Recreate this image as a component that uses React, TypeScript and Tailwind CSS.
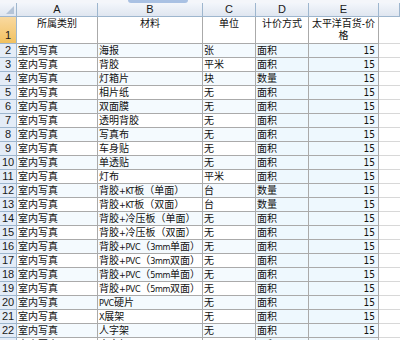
import React from "react";

const rows: [string, string, string][] = [
  ["海报", "张", "面积"],
  ["背胶", "平米", "面积"],
  ["灯箱片", "块", "数量"],
  ["相片纸", "无", "面积"],
  ["双面膜", "无", "面积"],
  ["透明背胶", "无", "面积"],
  ["写真布", "无", "面积"],
  ["车身贴", "无", "面积"],
  ["单透贴", "无", "面积"],
  ["灯布", "平米", "面积"],
  ["背胶+KT板（单面）", "台", "数量"],
  ["背胶+KT板（双面）", "台", "数量"],
  ["背胶+冷压板（单面）", "无", "面积"],
  ["背胶+冷压板（双面）", "无", "面积"],
  ["背胶+PVC（3mm单面）", "无", "面积"],
  ["背胶+PVC（3mm双面）", "无", "面积"],
  ["背胶+PVC（5mm单面）", "无", "面积"],
  ["背胶+PVC（5mm双面）", "无", "面积"],
  ["PVC硬片", "无", "面积"],
  ["X展架", "无", "面积"],
  ["人字架", "无", "面积"],
  ["人字架", "无", "面积"],
];

function Mixed({ text }: { text: string }) {
  const parts = text.split(/([\x20-\x7e]+)/).filter((p) => p.length > 0);
  return (
    <>
      {parts.map((p, i) =>
        /^[\x20-\x7e]+$/.test(p) ? (
          <span key={i} className="text-[9px] tracking-[-0.4px]">
            {p}
          </span>
        ) : (
          <span key={i}>{p}</span>
        )
      )}
    </>
  );
}

export default function App() {
  const font = "font-['DejaVu_Sans_Condensed','Noto_Sans_CJK_SC',sans-serif]";
  const cell = `h-[14px] border-r border-b border-[#aaaaaa] pl-[1px] whitespace-nowrap overflow-hidden text-[10px] leading-[13px] ${font}`;
  const head = `h-[27px] border-r border-b border-[#aaaaaa] text-center pt-[1px] text-[10px] leading-[12px] ${font}`;
  const hdrBg = "bg-gradient-to-b from-[#f3f6fb] to-[#dfe6f0] border-r border-b border-[#9eb6ce]";
  return (
    <div className="w-[400px] h-[340px] overflow-hidden bg-white">
      <div className="h-[3px] bg-[#f4f6fa] flex">
        <div className="ml-[128px] w-[60px] h-[3px] bg-[#a9c1e3] rounded-b-[3px]" />
      </div>
      <div className="grid grid-cols-[17px_81px_105px_53px_53px_70px_1fr] text-[#111]">
        <div className={`h-[14px] ${hdrBg} flex items-end justify-end pr-[2px] pb-[2px]`}>
          <div className="w-0 h-0 border-l-[8px] border-l-transparent border-b-[8px] border-b-[#b4c4d8]" />
        </div>
        {["A", "B", "C", "D", "E", ""].map((c, i) => (
          <div
            key={i}
            className={`h-[14px] ${hdrBg} text-center text-[11px] leading-[13px] text-[#1a1a1a] font-['Liberation_Sans',sans-serif]`}
          >
            {c}
          </div>
        ))}
        <div className="h-[27px] bg-gradient-to-b from-[#f9d99f] to-[#f1c15f] border-r border-b border-[#9eb6ce] flex items-end justify-center pb-[1px] text-[11px] leading-[13px] text-[#1a1a1a] font-['Liberation_Sans',sans-serif]">
          1
        </div>
        <div className={head}>所属类别</div>
        <div className={head}>材料</div>
        <div className={head}>单位</div>
        <div className={head}>计价方式</div>
        <div className={`${head} px-[2px] break-all`}>太平洋百货-价格</div>
        <div className="h-[27px] border-b border-[#d8d8d8]" />
        {rows.map((r, i) => {
          const n = i + 2;
          const tint = n % 2 === 0 ? "bg-[#f4fafe]" : "bg-white";
          return (
            <React.Fragment key={n}>
              <div className="h-[14px] bg-[#e4ecf7] border-r border-b border-[#9eb6ce] text-center text-[11px] leading-[13px] text-[#1a1a1a] font-['Liberation_Sans',sans-serif]">
                {n}
              </div>
              <div className={`${cell} ${tint}`}>室内写真</div>
              <div className={`${cell} ${tint}`}>
                <Mixed text={r[0]} />
              </div>
              <div className={`${cell} ${tint}`}>{r[1]}</div>
              <div className={`${cell} bg-[#eef8fe]`}>{r[2]}</div>
              <div className={`${cell} pr-[3px] text-right bg-[#eef8fe]`}>15</div>
              <div className="h-[14px] border-b border-[#d8d8d8]" />
            </React.Fragment>
          );
        })}
      </div>
    </div>
  );
}
